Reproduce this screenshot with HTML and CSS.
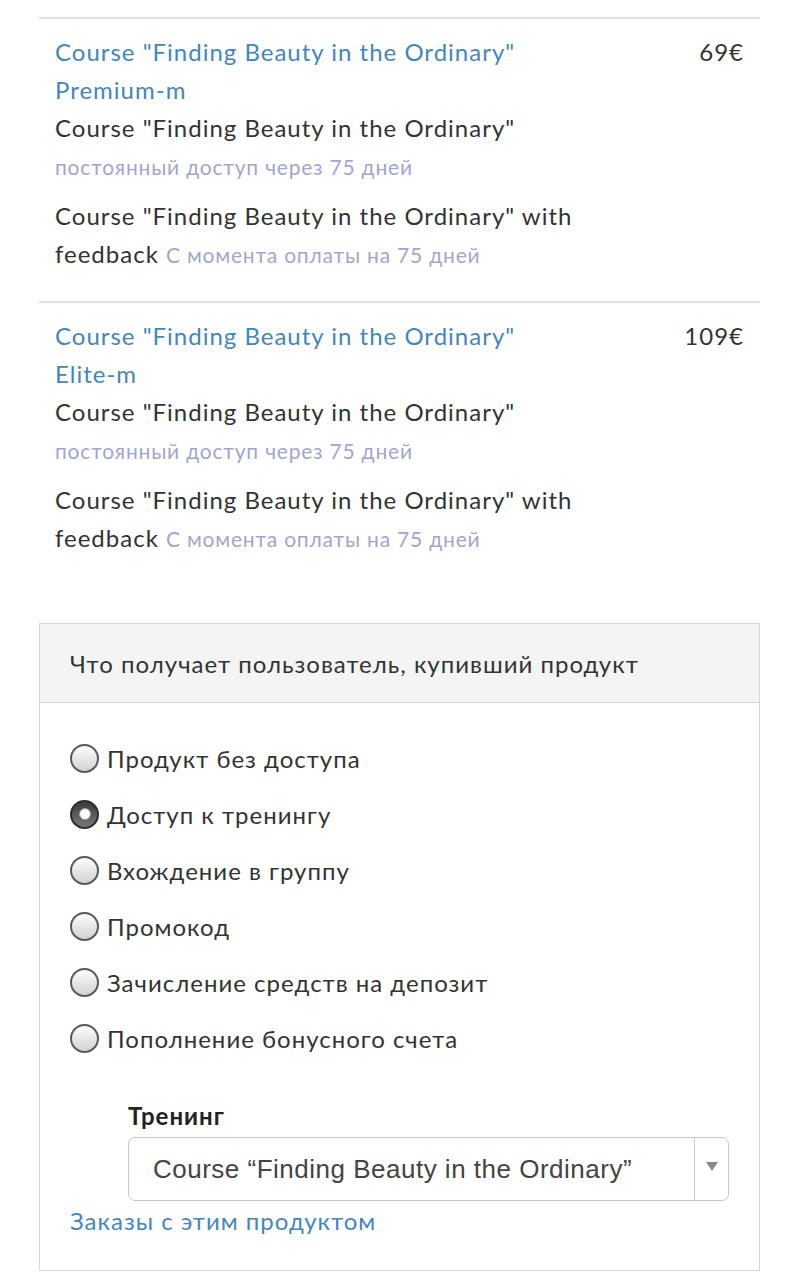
FILE: index.html
```html
<!DOCTYPE html>
<html lang="ru">
<head>
  <meta charset="UTF-8" />
  <title>Продукт</title>
  <link rel="stylesheet" href="styles.css">
</head>
<body>
  <div class="offers">
    <div class="offer">
      <div class="offer-info">
        <a class="offer-title" href="#">Course "Finding Beauty in the Ordinary" Premium-m</a>
        <div class="offer-item">Course "Finding Beauty in the Ordinary"</div>
        <div class="offer-note">постоянный доступ через 75 дней</div>
        <div class="offer-item">Course "Finding Beauty in the Ordinary" with feedback <span class="offer-inline-note">С момента оплаты на 75 дней</span></div>
      </div>
      <div class="offer-price">69€</div>
    </div>
    <div class="offer">
      <div class="offer-info">
        <a class="offer-title" href="#">Course "Finding Beauty in the Ordinary" Elite-m</a>
        <div class="offer-item">Course "Finding Beauty in the Ordinary"</div>
        <div class="offer-note">постоянный доступ через 75 дней</div>
        <div class="offer-item">Course "Finding Beauty in the Ordinary" with feedback <span class="offer-inline-note">С момента оплаты на 75 дней</span></div>
      </div>
      <div class="offer-price">109€</div>
    </div>
  </div>

  <div class="panel">
    <div class="panel-heading">Что получает пользователь, купивший продукт</div>
    <div class="panel-body">
      <label class="radio-row"><span class="radio"></span>Продукт без доступа</label>
      <label class="radio-row"><span class="radio checked"></span>Доступ к тренингу</label>
      <label class="radio-row"><span class="radio"></span>Вхождение в группу</label>
      <label class="radio-row"><span class="radio"></span>Промокод</label>
      <label class="radio-row"><span class="radio"></span>Зачисление средств на депозит</label>
      <label class="radio-row"><span class="radio"></span>Пополнение бонусного счета</label>

      <div class="training">
        <div class="training-label">Тренинг</div>
        <div class="select">
          <div class="select-value">Course “Finding Beauty in the Ordinary”</div>
          <div class="select-arrow"><span class="triangle"></span></div>
        </div>
      </div>
      <a class="orders-link" href="#">Заказы с этим продуктом</a>
    </div>
  </div>
</body>
</html>
```

FILE: styles.css
```css
* {
  box-sizing: border-box;
}

body, html {
  margin: 0;
  padding: 0;
  background: #fff;
  font-family: 'Lato', 'Open Sans', sans-serif;
  color: #333;
  letter-spacing: 1px;
}

a {
  text-decoration: none;
}

.offers {
  margin: 17px 39px 0;
}

.offer {
  display: flex;
  justify-content: space-between;
  border-top: 2px solid #e2e2e2;
  padding: 14px 16px 27px;
}

.offer-info {
  width: 530px;
  font-size: 24px;
  line-height: 38px;
}

.offer-title {
  display: block;
  max-width: 480px;
  color: #4586c0;
}

.offer-item {
  color: #333;
}

.offer-note {
  font-size: 21px;
  letter-spacing: 0.8px;
  line-height: 40px;
  color: #a3a5d4;
  margin-bottom: 10px;
}

.offer-inline-note {
  font-size: 21px;
  letter-spacing: 0.8px;
  color: #a3a5d4;
}

.offer-price {
  font-size: 24px;
  line-height: 38px;
  color: #333;
}

.panel {
  margin: 38px 39px 0;
  border: 1px solid #d6d6d6;
}

.panel-heading {
  background: #f4f4f4;
  border-bottom: 1px solid #d6d6d6;
  height: 79px;
  padding-left: 30px;
  display: flex;
  align-items: center;
  font-size: 24px;
  color: #333;
}

.panel-body {
  padding: 27px 30px 31px;
}

.radio-row {
  display: flex;
  align-items: center;
  height: 56px;
  font-size: 24px;
  color: #333;
}

.radio {
  width: 29px;
  height: 29px;
  border-radius: 50%;
  border: 2px solid #5a5a5a;
  background: linear-gradient(#fdfdfd, #d2d2d2);
  margin-right: 8px;
  flex-shrink: 0;
  display: flex;
  align-items: center;
  justify-content: center;
}

.radio.checked {
  border-color: #2e2e2e;
  background: linear-gradient(#3a3a3a, #7a7a7a);
}

.radio.checked::after {
  content: "";
  width: 10px;
  height: 10px;
  border-radius: 50%;
  background: #fff;
  border: 1px solid #999;
}

.training {
  margin: 34px 0 0 58px;
}

.training-label {
  font-size: 24px;
  font-weight: bold;
  line-height: 32px;
  color: #222;
}

.select {
  margin-top: 5px;
  height: 64px;
  width: 601px;
  border: 1px solid #c8c8c8;
  border-radius: 7px;
  display: flex;
}

.select-value {
  flex: 1;
  display: flex;
  align-items: center;
  padding-left: 24px;
  font-family: 'Liberation Sans', Arial, sans-serif;
  font-size: 26px;
  letter-spacing: 0.5px;
  color: #444;
}

.select-arrow {
  width: 34px;
  border-left: 1px solid #c8c8c8;
  display: flex;
  align-items: center;
  justify-content: center;
  padding-bottom: 6px;
}

.triangle {
  width: 0;
  height: 0;
  border-left: 6px solid transparent;
  border-right: 6px solid transparent;
  border-top: 9px solid #8a8a8a;
}

.orders-link {
  display: block;
  margin-top: 2px;
  font-size: 24px;
  line-height: 36px;
  color: #4586c0;
}
```
